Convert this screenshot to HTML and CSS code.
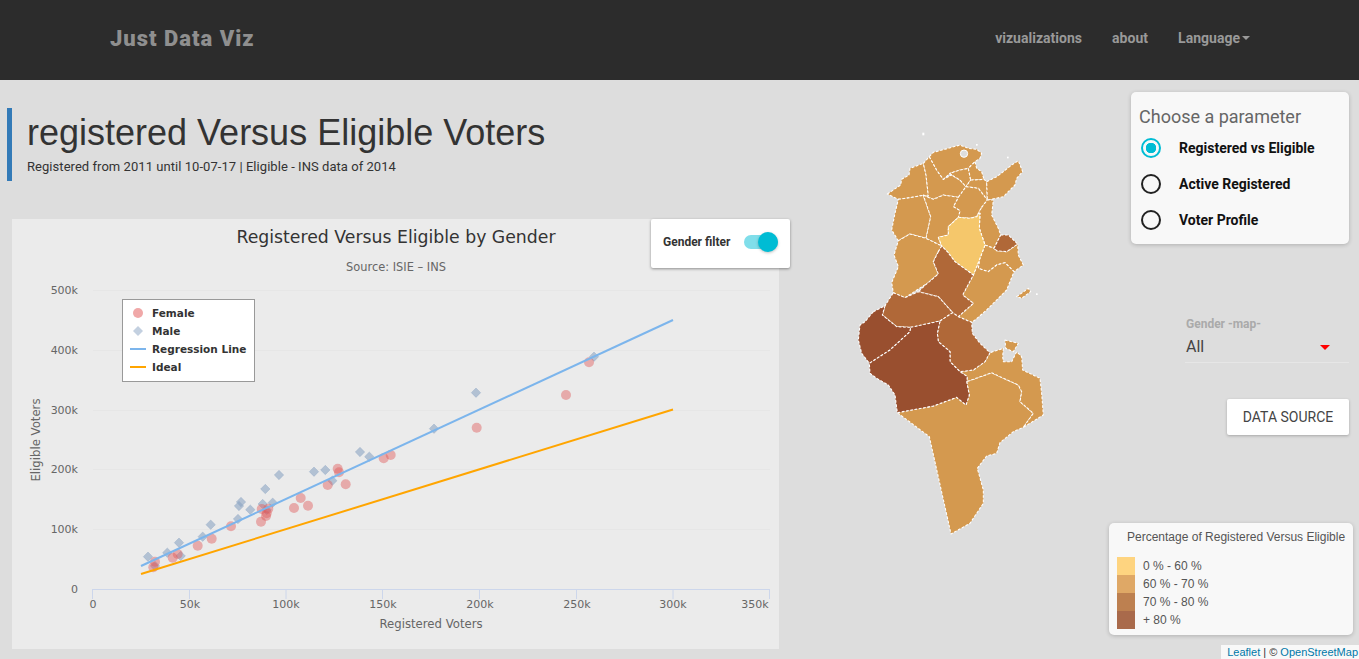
FILE: index.html
```html
<!DOCTYPE html>
<html lang="en">
<head>
<meta charset="utf-8">
<title>Just Data Viz</title>
<link rel="stylesheet" href="styles.css">
</head>
<body>
<nav class="navbar">
  <a class="brand">Just Data Viz</a>
  <ul class="nav-links">
    <li>vizualizations</li>
    <li>about</li>
    <li class="dropdown">Language<span class="caret"></span></li>
  </ul>
</nav>
<main class="page">
  <section class="left">
    <header class="title-block">
      <h1>registered Versus Eligible Voters</h1>
      <p>Registered from 2011 until 10-07-17 | Eligible - INS data of 2014</p>
    </header>
    <div class="chart-card">
      <svg class="chart" viewBox="12 219 767 430" width="767" height="430">
        <text class="c-title" x="396" y="243" text-anchor="middle">Registered Versus Eligible by Gender</text>
        <text class="c-sub" x="396" y="271" text-anchor="middle">Source: ISIE – INS</text>
        <g class="grid">
          <line x1="93" x2="770" y1="290.5" y2="290.5"/>
          <line x1="93" x2="770" y1="350.5" y2="350.5"/>
          <line x1="93" x2="770" y1="410.5" y2="410.5"/>
          <line x1="93" x2="770" y1="469.5" y2="469.5"/>
          <line x1="93" x2="770" y1="529.5" y2="529.5"/>
        </g>
        <g class="axis">
          <line x1="92.5" x2="770" y1="589.5" y2="589.5"/>
          <line x1="92.5" x2="92.5" y1="589" y2="599"/>
          <line x1="189.5" x2="189.5" y1="589" y2="599"/>
          <line x1="286" x2="286" y1="589" y2="599"/>
          <line x1="382.5" x2="382.5" y1="589" y2="599"/>
          <line x1="479.5" x2="479.5" y1="589" y2="599"/>
          <line x1="576.5" x2="576.5" y1="589" y2="599"/>
          <line x1="673" x2="673" y1="589" y2="599"/>
          <line x1="769.5" x2="769.5" y1="589" y2="599"/>
        </g>
        <g class="ticks" text-anchor="end">
          <text x="78" y="294">500k</text>
          <text x="78" y="354">400k</text>
          <text x="78" y="414">300k</text>
          <text x="78" y="473">200k</text>
          <text x="78" y="533">100k</text>
          <text x="78" y="593">0</text>
        </g>
        <g class="ticks" text-anchor="middle">
          <text x="93" y="608">0</text>
          <text x="190" y="608">50k</text>
          <text x="286" y="608">100k</text>
          <text x="383" y="608">150k</text>
          <text x="480" y="608">200k</text>
          <text x="577" y="608">250k</text>
          <text x="673" y="608">300k</text>
          <text x="755" y="608">350k</text>
        </g>
        <text class="axis-title" x="431" y="628" text-anchor="middle">Registered Voters</text>
        <text class="axis-title" x="40" y="440" text-anchor="middle" transform="rotate(-90 40 440)">Eligible Voters</text>
        <g class="male">
          <path d="M148 552l4.7 4.7-4.7 4.7-4.7-4.7z"/><path d="M155 561.3l4.7 4.7-4.7 4.7-4.7-4.7z"/><path d="M167.3 548l4.7 4.7-4.7 4.7-4.7-4.7z"/><path d="M179 538l4.7 4.7-4.7 4.7-4.7-4.7z"/><path d="M180.7 551.3l4.7 4.7-4.7 4.7-4.7-4.7z"/><path d="M202.7 532l4.7 4.7-4.7 4.7-4.7-4.7z"/><path d="M210.7 520l4.7 4.7-4.7 4.7-4.7-4.7z"/><path d="M238 514.3l4.7 4.7-4.7 4.7-4.7-4.7z"/><path d="M239 501.3l4.7 4.7-4.7 4.7-4.7-4.7z"/><path d="M241 497.3l4.7 4.7-4.7 4.7-4.7-4.7z"/><path d="M250.3 505l4.7 4.7-4.7 4.7-4.7-4.7z"/><path d="M262.7 499.3l4.7 4.7-4.7 4.7-4.7-4.7z"/><path d="M272.7 498l4.7 4.7-4.7 4.7-4.7-4.7z"/><path d="M265.3 484.3l4.7 4.7-4.7 4.7-4.7-4.7z"/><path d="M279 470.3l4.7 4.7-4.7 4.7-4.7-4.7z"/><path d="M266.7 505.3l4.7 4.7-4.7 4.7-4.7-4.7z"/><path d="M314 467l4.7 4.7-4.7 4.7-4.7-4.7z"/><path d="M325.3 465.3l4.7 4.7-4.7 4.7-4.7-4.7z"/><path d="M332.3 476l4.7 4.7-4.7 4.7-4.7-4.7z"/><path d="M360 447.3l4.7 4.7-4.7 4.7-4.7-4.7z"/><path d="M369.3 452l4.7 4.7-4.7 4.7-4.7-4.7z"/><path d="M434 424l4.7 4.7-4.7 4.7-4.7-4.7z"/><path d="M476 388l4.7 4.7-4.7 4.7-4.7-4.7z"/><path d="M594 352l4.7 4.7-4.7 4.7-4.7-4.7z"/>
        </g>
        <g class="female">
          <circle cx="153.3" cy="567.3" r="5"/><circle cx="155" cy="561.7" r="5"/><circle cx="172.7" cy="557.7" r="5"/><circle cx="177.7" cy="554" r="5"/><circle cx="197.7" cy="545.7" r="5"/><circle cx="211.7" cy="538.7" r="5"/><circle cx="231" cy="526.3" r="5"/><circle cx="261" cy="521.7" r="5"/><circle cx="261.7" cy="509" r="5"/><circle cx="268.3" cy="508.7" r="5"/><circle cx="266.7" cy="513.3" r="5"/><circle cx="266" cy="516" r="5"/><circle cx="294" cy="508" r="5"/><circle cx="300.7" cy="498" r="5"/><circle cx="308" cy="505.7" r="5"/><circle cx="327.7" cy="485" r="5"/><circle cx="339" cy="472.3" r="5"/><circle cx="337.7" cy="468.7" r="5"/><circle cx="345.7" cy="484.3" r="5"/><circle cx="383.7" cy="458.3" r="5"/><circle cx="390.7" cy="455" r="5"/><circle cx="566" cy="395" r="5"/><circle cx="476.7" cy="427.7" r="5"/><circle cx="589" cy="362.3" r="5"/>
        </g>
        <line class="reg" x1="141" y1="566" x2="673" y2="320"/>
        <line class="ideal" x1="141" y1="574" x2="673" y2="409.5"/>
        <rect class="lg-box" x="122.5" y="299.5" width="132" height="82"/>
        <circle class="lg-f" cx="138" cy="313" r="5"/>
        <path class="lg-m" d="M138 326l5 5-5 5-5-5z"/>
        <line class="reg" x1="130" x2="146" y1="349" y2="349"/>
        <line class="ideal" x1="130" x2="146" y1="367" y2="367"/>
        <g class="lg-text">
          <text x="152" y="317">Female</text>
          <text x="152" y="335">Male</text>
          <text x="152" y="353">Regression Line</text>
          <text x="152" y="371">Ideal</text>
        </g>
      </svg>
      <div class="filter-card">
        <span class="filter-label">Gender filter</span>
        <span class="switch"><i class="track"></i><i class="knob"></i></span>
      </div>
    </div>
  </section>
  <svg class="map" viewBox="0 0 660 1320" width="220" height="440">
    <g class="c2">
      <path d="M142 222L160 210 182 195 185 178 207 165 210 145 250 130 258 165 265 228 250 226 210 233 175 238Z"/>
      <path d="M250 130L268 110 290 150 310 178 335 165 360 180 378 200 355 232 310 225 280 238 250 226 265 228 258 165Z"/>
      <path d="M268 110L280 97 325 85 360 75 385 85 410 88 425 100 420 115 405 125 385 145 360 150 330 160 310 178 290 150Z"/>
      <path d="M335 165L330 160 360 150 385 145 392 180 378 200 360 180Z"/>
      <path d="M405 125L410 145 425 155 432 178 400 180 392 180 385 145Z"/>
      <path d="M392 180L400 180 432 178 440 185 442 240 415 205 378 200Z"/>
      <path d="M440 185L470 170 490 155 515 135 535 122 548 155 530 175 525 195 505 215 490 230 445 240 442 240Z"/>
      <path d="M378 200L415 205 442 240 425 262 410 290 390 295 355 292 360 272 340 260 355 232Z"/>
      <path d="M175 238L210 233 250 226 272 290 258 355 210 342 175 362 155 330 165 280Z"/>
      <path d="M250 226L280 238 310 225 355 232 340 260 360 272 355 292 325 320 325 345 295 352 305 378 258 355 272 290Z"/>
      <path d="M425 262L442 240 445 240 460 240 455 285 475 325 482 345 462 385 435 375 418 325 420 280 410 290Z"/>
      <path d="M435 375L462 385 470 392 500 395 533 372 535 405 550 435 522 455 495 428 470 435 445 455 415 445 418 420Z"/>
      <path d="M400 465L418 420 415 445 445 455 470 435 495 428 522 455 500 510 440 570 405 600 395 607 355 590 400 550 368 525Z"/>
      <path d="M175 362L210 342 258 355 305 378 295 395 280 425 295 462 262 490 195 533 160 518 155 488 175 440 162 405Z"/>
      <path d="M530 530L565 505 572 515 545 535Z"/>
      <path d="M172 878L280 858 350 832 378 855 388 825 380 785 455 758 480 770 535 795 545 815 540 845 580 880 550 922 520 935 480 968 470 1000 440 1008 412 1045 430 1110 430 1150 390 1210 333 1242 268 950Z"/>
      <path d="M360 755L400 750 435 725 450 698 490 685 488 710 490 725 515 725 530 695 545 710 548 750 600 775 605 820 610 885 550 922 580 880 540 845 545 815 535 795 480 770 455 758 380 785 382 770Z"/>
      <path d="M495 660L535 670 520 695 497 685Z"/>
    </g>
    <path class="c1" d="M355 292L390 295 410 290 420 280 418 325 435 375 418 420 400 465 345 425 322 395 305 378 295 352 325 345 325 320Z"/>
    <g class="c3">
      <path d="M482 345L505 345 533 372 500 395 470 392 462 385Z"/>
      <path d="M295 395L305 378 322 395 345 425 400 465 368 525 400 550 355 590 338 578 295 530 235 515 262 490 295 462 280 425Z"/>
      <path d="M160 518L195 533 235 515 295 530 338 578 300 603 215 622 170 620 127 585 135 557Z"/>
      <path d="M300 603L338 578 355 590 395 607 397 640 420 670 450 698 435 725 400 750 360 755 330 725 330 695 295 665 292 640Z"/>
    </g>
    <g class="c4">
      <path d="M100 575L135 557 127 585 170 620 212 622 210 635 150 690 88 730 65 700 55 660 60 615 75 605Z"/>
      <path d="M212 622L300 603 292 640 295 665 330 695 330 725 360 755 382 770 380 785 388 825 378 855 350 832 280 858 172 878 165 825 145 795 110 775 90 760 88 730 150 690 210 635Z"/>
    </g>
    <circle class="lake" cx="372" cy="101" r="11"/>
    <g class="isle">
      <rect x="247" y="38" width="6" height="8"/><rect x="408" y="72" width="5" height="5"/><rect x="501" y="110" width="5" height="5"/><rect x="588" y="520" width="5" height="5"/>
    </g>
  </svg>
  <aside class="param-card">
    <h2>Choose a parameter</h2>
    <div class="radio on"><i></i>Registered vs Eligible</div>
    <div class="radio"><i></i>Active Registered</div>
    <div class="radio"><i></i>Voter Profile</div>
  </aside>
  <div class="select-box">
    <label>Gender -map-</label>
    <div class="select-value">All<span class="arrow"></span></div>
  </div>
  <button class="source-btn">DATA SOURCE</button>
  <div class="legend-card">
    <h3>Percentage of Registered Versus Eligible</h3>
    <div class="row"><i class="s1"></i>0 % - 60 %</div>
    <div class="row"><i class="s2"></i>60 % - 70 %</div>
    <div class="row"><i class="s3"></i>70 % - 80 %</div>
    <div class="row"><i class="s4"></i>+ 80 %</div>
  </div>
  <div class="attribution"><a>Leaflet</a> | © <a>OpenStreetMap</a></div>
</main>
</body>
</html>
```
FILE: styles.css
```css
* { box-sizing: border-box; }
html, body { margin: 0; height: 659px; overflow: hidden; }
body { background: #dddddd; font-family: Roboto, sans-serif; color: #333; }

.navbar { height: 80px; background: #2c2c2c; display: flex; align-items: center; justify-content: space-between; padding: 0 109px 0 110px; }
.brand { font: 900 22px Roboto, sans-serif; letter-spacing: 1px; color: #8f8f8f; margin-top: -3px; }
.nav-links { list-style: none; display: flex; gap: 30px; margin: -5px 0 0; padding: 0; font: 700 14px Roboto, sans-serif; letter-spacing: .02px; color: #999; }
.dropdown { display: flex; align-items: center; }
.caret { width: 0; height: 0; margin-left: 2px; border: 4px solid transparent; border-top-color: #999; border-bottom: 0; }

.page { position: relative; height: 579px; }
.left { padding: 28px 0 0 7px; width: 800px; }
.title-block { height: 73px; border-left: 5px solid #337ab7; padding-left: 15px; }
.title-block h1 { margin: 0; padding-top: 5px; font: 400 36px/40px "Liberation Sans", sans-serif; color: #333; }
.title-block p { margin: 4px 0 0; font: 400 13px/20px Roboto, sans-serif; letter-spacing: .05px; color: #333; }

.chart-card { position: relative; margin: 38px 0 0 5px; width: 767px; height: 430px; background: #ebebeb; }
.chart { display: block; }
.c-title { font: 400 17.3px "DejaVu Sans", sans-serif; fill: #333; }
.c-sub { font: 400 11.4px "DejaVu Sans", sans-serif; fill: #666; }
.grid line { stroke: #e6e6e6; stroke-width: 1; }
.axis line { stroke: #ccd6eb; stroke-width: 1; }
.ticks text { font: 400 11px "DejaVu Sans", sans-serif; fill: #666; }
.axis-title { font: 400 11.7px "DejaVu Sans", sans-serif; fill: #666; }
.male path { fill: rgba(140, 165, 195, .6); stroke: rgba(140, 165, 195, .6); stroke-width: .6; }
.female circle { fill: rgba(225, 90, 90, .45); }
.reg { stroke: #7cb5ec; stroke-width: 2; }
.ideal { stroke: #ffa500; stroke-width: 2; }
.lg-box { fill: #fff; stroke: #999; stroke-width: 1; }
.lg-f { fill: #f0a8a8; }
.lg-m { fill: #c3d0e0; }
.lg-text text { font: 700 10.5px "DejaVu Sans", sans-serif; fill: #333; }

.filter-card { position: absolute; left: 639px; top: 0; width: 139px; height: 49px; background: #fff; border-radius: 2px; box-shadow: 0 1px 3px rgba(0,0,0,.4); display: flex; align-items: center; justify-content: space-between; padding: 0 12px 4px; font: 700 12px Roboto, sans-serif; color: #333; }
.filter-label { white-space: nowrap; }
.switch { position: relative; flex: none; width: 34px; height: 14px; }
.track { position: absolute; inset: 0; border-radius: 7px; background: #80deea; }
.knob { position: absolute; right: 0; top: -3px; width: 20px; height: 20px; border-radius: 50%; background: #00bcd4; box-shadow: 0 1px 3px rgba(0,0,0,.25); }

.map { position: absolute; left: 840px; top: 40px; }
.map path { stroke: #fff; stroke-width: 3.2; stroke-dasharray: 8 5; stroke-linejoin: round; }
.c1 { fill: #f5c76b; }
.c2 path { fill: #d4994f; }
.c3 path { fill: #b06838; }
.c4 path { fill: #994f2f; }
.lake { fill: #ddd; stroke: #fff; stroke-width: 3; }
.isle rect { fill: #fff; }

.param-card { position: absolute; left: 1131px; top: 12px; width: 218px; height: 152px; background: #f8f8f8; border-radius: 5px; box-shadow: 0 1px 4px rgba(0,0,0,.2); padding: 15px 8px 0; }
.param-card h2 { margin: 0 0 3px; font: 400 18px/20px Roboto, sans-serif; color: #666; }
.radio { display: flex; align-items: center; height: 36px; padding-left: 2px; font: 700 14px Roboto, sans-serif; color: #111; }
.radio i { width: 20px; height: 20px; border: 2px solid #222; border-radius: 50%; margin-right: 18px; flex: none; }
.radio.on i { border-color: #00bcd4; background: radial-gradient(circle, #00bcd4 0 5px, transparent 5.5px); }

.select-box { position: absolute; left: 1185px; top: 237px; width: 164px; height: 46px; padding-left: 1px; border-bottom: 1px solid #e6e6e6; }
.select-box label { display: block; font: 700 12px/14px Roboto, sans-serif; color: #aaa; }
.select-value { display: flex; justify-content: space-between; align-items: center; margin-top: 6px; font: 400 16px/20px Roboto, sans-serif; color: #444; }
.arrow { width: 0; height: 0; margin-right: 19px; border: 5px solid transparent; border-top-color: #f00; border-bottom: 0; }

.source-btn { position: absolute; left: 1227px; top: 319px; width: 122px; height: 36px; border: 0; background: #fff; border-radius: 2px; box-shadow: 0 1px 3px rgba(0,0,0,.25); font: 400 14px Roboto, sans-serif; color: #444; }

.legend-card { position: absolute; left: 1109px; top: 443px; width: 244px; height: 112px; background: #f8f8f8; border-radius: 5px; box-shadow: 0 1px 4px rgba(0,0,0,.2); padding: 7px 8px; font: 400 12px/18px "Liberation Sans", sans-serif; color: #555; }
.legend-card h3 { margin: 0 0 13px 10px; font: 400 12px/14px "Liberation Sans", sans-serif; color: #555; white-space: nowrap; }
.row { display: flex; height: 18px; }
.row i { width: 18px; height: 18px; margin-right: 8px; }
.s1 { background: #fed480; }
.s2 { background: #dfa866; }
.s3 { background: #bd8050; }
.s4 { background: #a96a4b; }

.attribution { position: absolute; right: 0; bottom: 0; height: 14px; padding: 0 1px 0 6px; background: rgba(255,255,255,.8); font: 400 11px/14px "Liberation Sans", sans-serif; color: #333; }
.attribution a { color: #0078a8; }
```
